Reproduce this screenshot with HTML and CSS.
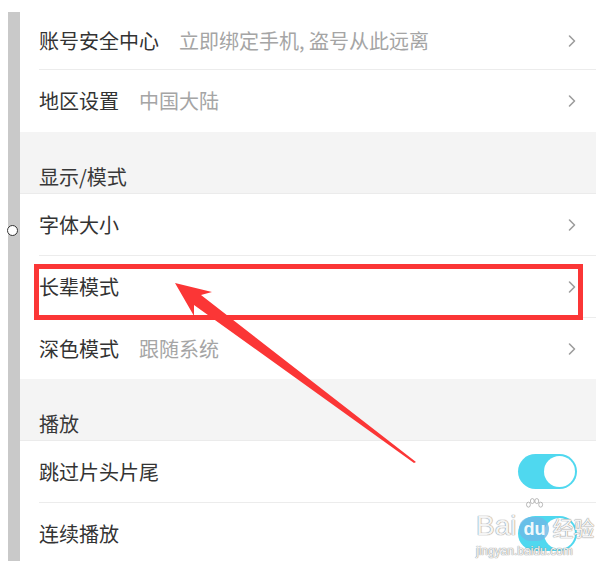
FILE: index.html
```html
<!DOCTYPE html>
<html lang="zh-CN">
<head>
    <meta charset="UTF-8">
    <title>设置</title>
    <link rel="stylesheet" href="styles.css">
</head>
<body>
<div class="screen">
    <div class="rail"></div>
    <div class="settings">
        <div class="group">
            <div class="row row--first">
                <span class="row__title">账号安全中心</span>
                <span class="row__hint">立即绑定手机, 盗号从此远离</span>
                <svg class="chevron" viewBox="0 0 10 14"><polyline points="2.5,2 7.5,7 2.5,12"/></svg>
            </div>
            <div class="row row--last row--tall">
                <span class="row__title">地区设置</span>
                <span class="row__hint">中国大陆</span>
                <svg class="chevron" viewBox="0 0 10 14"><polyline points="2.5,2 7.5,7 2.5,12"/></svg>
            </div>
        </div>

        <div class="section-title">显示/模式</div>
        <div class="group">
            <div class="row">
                <span class="row__title">字体大小</span>
                <svg class="chevron" viewBox="0 0 10 14"><polyline points="2.5,2 7.5,7 2.5,12"/></svg>
            </div>
            <div class="row">
                <span class="row__title">长辈模式</span>
                <svg class="chevron" viewBox="0 0 10 14"><polyline points="2.5,2 7.5,7 2.5,12"/></svg>
            </div>
            <div class="row row--last">
                <span class="row__title">深色模式</span>
                <span class="row__hint">跟随系统</span>
                <svg class="chevron" viewBox="0 0 10 14"><polyline points="2.5,2 7.5,7 2.5,12"/></svg>
            </div>
        </div>

        <div class="section-title">播放</div>
        <div class="group">
            <div class="row">
                <span class="row__title">跳过片头片尾</span>
                <span class="toggle"><span class="toggle__knob"></span></span>
            </div>
            <div class="row row--last">
                <span class="row__title">连续播放</span>
                <span class="toggle"><span class="toggle__knob"></span></span>
            </div>
        </div>
    </div>
</div>

<span class="rail-knob"></span>
<div class="highlight"></div>

<svg class="arrow" viewBox="0 0 613 561">
    <polygon points="175,283 212,292 201,295 416,462 414,463 194,305 194,316"/>
</svg>

<div class="watermark">
    <div class="watermark__brand">
        <span>Bai</span>
        <span class="watermark__paw">
            <svg viewBox="0 0 36 36">
                <ellipse cx="8" cy="12" rx="3.5" ry="4.5"/>
                <ellipse cx="15" cy="5.5" rx="3.5" ry="4.5"/>
                <ellipse cx="23" cy="5.5" rx="3.5" ry="4.5"/>
                <ellipse cx="30" cy="12" rx="3.5" ry="4.5"/>
            </svg>
            <span class="watermark__du">du</span>
        </span>
        <span class="watermark__cn">经验</span>
    </div>
    <div class="watermark__url">jingyan.baidu.com</div>
</div>
</body>
</html>
```

FILE: styles.css
```css
html, body {
    margin: 0;
    padding: 0;
    background-color: #ffffff;
}

body {
    position: relative;
    width: 613px;
    height: 561px;
    overflow: hidden;
    font-family: "Noto Sans CJK SC", "Noto Sans", sans-serif;
    color: #333333;
}

.screen {
    display: flex;
    padding: 12px 0 0 8px;
    width: 588px;
}

.rail {
    width: 12px;
    flex-shrink: 0;
    background-color: #c9c9c9;
}

.settings {
    flex: 1;
    background-color: #f4f4f4;
}

.group {
    background-color: #ffffff;
    padding-left: 19px;
}

.row {
    display: flex;
    align-items: center;
    height: 61px;
    padding-right: 19px;
    border-bottom: 1px solid #ececec;
    font-size: 20px;
    line-height: 24px;
}

.row--first {
    height: 57px;
}

.row--tall {
    height: 62px;
}

.row--last {
    border-bottom: none;
}

.row__title {
    color: #333333;
}

.row__hint {
    margin-left: 20px;
    color: #a5a5a5;
}

.chevron {
    width: 10px;
    height: 14px;
    margin-left: auto;
    fill: none;
    stroke: #9d9d9d;
    stroke-width: 1.6;
    stroke-linecap: round;
    stroke-linejoin: round;
}

.section-title {
    display: flex;
    align-items: flex-end;
    height: 62px;
    box-sizing: border-box;
    padding: 0 0 4px 19px;
    border-bottom: 1px solid #ebebeb;
    font-size: 20px;
    line-height: 24px;
    color: #383838;
}

.toggle {
    position: relative;
    margin-left: auto;
    width: 59px;
    height: 35px;
    border-radius: 18px;
    background-color: #4fd8ef;
}

.toggle__knob {
    position: absolute;
    top: 2px;
    right: 2px;
    width: 31px;
    height: 31px;
    border-radius: 50%;
    background-color: #ffffff;
}

/* markup drawn over the screenshot */
.rail-knob {
    position: absolute;
    left: 7px;
    top: 225px;
    width: 9px;
    height: 9px;
    border: 1.5px solid #333333;
    border-radius: 50%;
    background-color: #ffffff;
}

.highlight {
    position: absolute;
    left: 34px;
    top: 264px;
    width: 539px;
    height: 46px;
    border: 5px solid #fb3636;
}

.arrow {
    position: absolute;
    left: 0;
    top: 0;
    width: 613px;
    height: 561px;
    fill: #fb3636;
}

.watermark {
    position: absolute;
    left: 476px;
    top: 498px;
    color: rgba(255, 255, 255, 0.92);
    text-shadow: 0 0 1px #8a8a8a, 0 0 1px #8a8a8a;
}

.watermark__brand {
    display: flex;
    align-items: flex-end;
    font-family: "Liberation Sans", sans-serif;
    font-size: 28px;
    line-height: 32px;
}

.watermark__paw {
    position: relative;
    width: 34px;
    height: 44px;
    margin: 0 1px;
}

.watermark__paw svg {
    position: absolute;
    left: 0;
    top: 0;
    width: 34px;
    height: 20px;
    fill: rgba(255, 255, 255, 0.9);
    stroke: #999999;
    stroke-width: 1.2;
}

.watermark__du {
    position: absolute;
    left: 2px;
    bottom: 1px;
    width: 30px;
    height: 24px;
    border-radius: 12px;
    background-color: rgba(110, 185, 230, 0.8);
    font-size: 18px;
    line-height: 24px;
    text-align: center;
    font-weight: bold;
    text-shadow: none;
}

.watermark__cn {
    font-family: "Noto Sans CJK SC", sans-serif;
    font-size: 21px;
    line-height: 30px;
}

.watermark__url {
    font-family: "Liberation Sans", sans-serif;
    font-size: 12px;
    line-height: 16px;
    margin-top: 1px;
}
```
